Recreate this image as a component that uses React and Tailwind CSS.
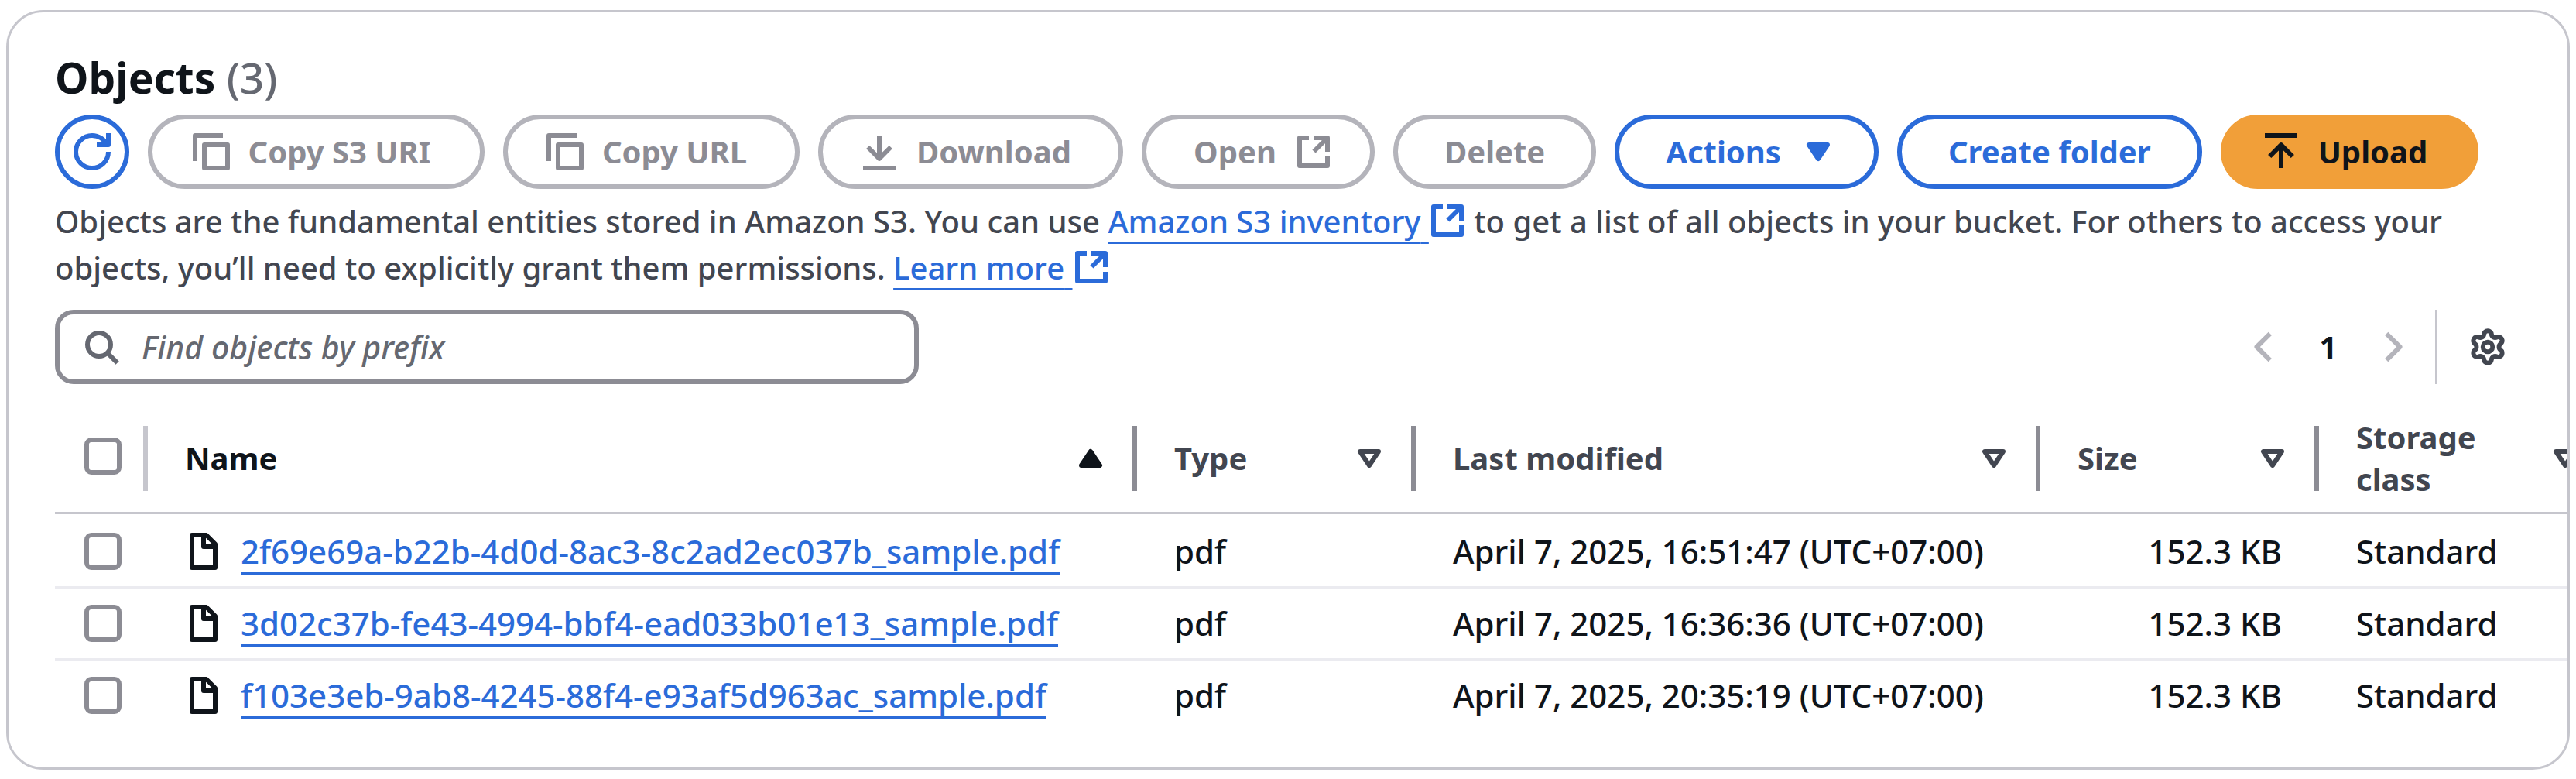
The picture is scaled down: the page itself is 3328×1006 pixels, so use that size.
import { Settings } from "lucide-react";

function Icon({ children, className = "", fill = "none" }) {
  return (
    <svg
      viewBox="0 0 48 48"
      fill={fill}
      stroke="currentColor"
      strokeWidth="6"
      strokeLinejoin="round"
      aria-hidden="true"
      className={`size-12 shrink-0 ${className}`}
    >
      {children}
    </svg>
  );
}

const RefreshIcon = () => (
  <Icon>
    <path d="M45 24A21 21 0 1 1 24 3C32.5 3 39.8 7.9 43 15" />
    <path d="M45 0V15H30" />
  </Icon>
);

const CopyIcon = () => (
  <Icon>
    <path d="M3 36V3H39" />
    <path d="M15 15H45V45H15Z" />
  </Icon>
);

const DownloadIcon = () => (
  <Icon>
    <path d="M24 3V32" />
    <path d="M9.2 18L24 32.8L38.8 18" />
    <path d="M3 45H45" />
  </Icon>
);

const UploadIcon = () => (
  <Icon>
    <path d="M24 16V45" />
    <path d="M9.2 30L24 15.2L38.8 30" />
    <path d="M3 3H45" />
  </Icon>
);

const ExternalIcon = ({ className }) => (
  <Icon className={className}>
    <path d="M18 6H6V42H42V30" />
    <path d="M24 6H42V24" />
    <path d="M24.5 23.5L42 6" />
  </Icon>
);

const SearchIcon = () => (
  <Icon className="text-[#656871]">
    <circle cx="21" cy="21" r="15" />
    <path d="M31 31L44.6 44.6" />
  </Icon>
);

const FileIcon = () => (
  <Icon>
    <path d="M9 3H27.5L39 14.5V45H9Z" />
    <path d="M24 3V18H39" />
  </Icon>
);

const CaretDownFilled = () => (
  <Icon fill="currentColor">
    <path d="M12 15H36L24 33Z" />
  </Icon>
);

const CaretDown = () => (
  <Icon>
    <path d="M12 15H36L24 33Z" />
  </Icon>
);

const CaretUpFilled = () => (
  <Icon fill="currentColor">
    <path d="M24 15L36 33H12Z" />
  </Icon>
);

const variants = {
  disabled: "border-[#b4b4bb] text-[#8c8c94]",
  normal: "border-[#2b6bd9] text-[#2b6bd9]",
  primary: "border-[#f19f39] bg-[#f19f39] text-[#0f141a]",
};

function Button({ variant = "normal", before, after, className = "", children }) {
  return (
    <button
      type="button"
      disabled={variant === "disabled"}
      className={`flex h-24 items-center justify-center gap-6 rounded-full border-6 font-bold ${
        before ? "pl-12" : "pl-15"
      } ${after ? "pr-12" : "pr-15"} ${variants[variant]} ${className}`}
    >
      {before}
      {children}
      {after}
    </button>
  );
}

function ExternalLink({ children }) {
  return (
    <a href="#" className="whitespace-nowrap text-[#2b6bd9]">
      <span className="underline decoration-3 underline-offset-[11px] [text-decoration-skip-ink:none]">
        {children}&nbsp;
      </span>
      <ExternalIcon className="inline-block align-[-8px]" />
    </a>
  );
}

function Checkbox({ label }) {
  return (
    <input
      type="checkbox"
      aria-label={label}
      className="block size-12 appearance-none rounded-[9px] border-6 border-[#8c8c94] bg-white checked:bg-[#2b6bd9]"
    />
  );
}

const columns = [
  { title: "Name", sorted: true },
  { title: "Type" },
  { title: "Last modified" },
  { title: "Size" },
  { title: "Storage class", last: true },
];

const objects = [
  { name: "2f69e69a-b22b-4d0d-8ac3-8c2ad2ec037b_sample.pdf", modified: "April 7, 2025, 16:51:47 (UTC+07:00)" },
  { name: "3d02c37b-fe43-4994-bbf4-ead033b01e13_sample.pdf", modified: "April 7, 2025, 16:36:36 (UTC+07:00)" },
  { name: "f103e3eb-9ab8-4245-88f4-e93af5d963ac_sample.pdf", modified: "April 7, 2025, 20:35:19 (UTC+07:00)" },
];

function HeaderCell({ title, sorted, last }) {
  return (
    <th
      scope="col"
      aria-sort={sorted ? "ascending" : "none"}
      className={`p-0 py-[15px] pl-12 text-left font-bold ${sorted ? "text-[#0f141a]" : "text-[#424650]"}`}
    >
      <div className="flex items-center">
        <button type="button" className="flex grow items-center justify-between text-left">
          <span>{title}</span>
          {sorted ? <CaretUpFilled /> : <CaretDown />}
        </button>
        <span className={`ml-[30px] h-21 w-1.5 shrink-0 ${last ? "" : "bg-[#8c8c94]"}`} />
      </div>
    </th>
  );
}

function ObjectsTable() {
  return (
    <div className="mt-[27px] ml-15 overflow-x-auto [scrollbar-width:none]">
      <table className="w-full min-w-[3303px] table-fixed border-separate border-spacing-0">
        <colgroup>
          <col className="w-[120px]" />
          <col />
          <col className="w-[360px]" />
          <col className="w-[807px]" />
          <col className="w-[360px]" />
          <col className="w-[378px]" />
        </colgroup>
        <thead className="leading-[54px]">
          <tr className="*:border-b-3 *:border-[#c6c6cd]">
            <th scope="col" className="p-0">
              <div className="flex items-center justify-between pl-[38px]">
                <div className="pb-1.5">
                  <Checkbox label="Select all objects" />
                </div>
                <span className="h-21 w-1.5 bg-[#c6c6cd]" />
              </div>
            </th>
            {columns.map((c) => (
              <HeaderCell key={c.title} {...c} />
            ))}
          </tr>
        </thead>
        <tbody className="text-[42px] leading-[60px] font-medium whitespace-nowrap">
          {objects.map((o) => (
            <tr
              key={o.name}
              className="h-[93px] *:border-b-3 *:border-[#ebebf0] first:h-24 first:*:pt-[3px] last:*:border-transparent"
            >
              <td className="pl-[38px]">
                <Checkbox label={`Select ${o.name}`} />
              </td>
              <td className="pl-12">
                <div className="flex items-center gap-6">
                  <FileIcon />
                  <a
                    href="#"
                    className="text-[#2b6bd9] underline decoration-3 underline-offset-[11px] [text-decoration-skip-ink:none]"
                  >
                    {o.name}
                  </a>
                </div>
              </td>
              <td className="pl-12">pdf</td>
              <td className="pl-12">{o.modified}</td>
              <td className="pr-12 text-right">152.3 KB</td>
              <td className="pl-12">Standard</td>
            </tr>
          ))}
        </tbody>
      </table>
    </div>
  );
}

export default function App() {
  return (
    <main className="bg-white px-2 pt-[13px] pb-3 font-['Noto_Sans',sans-serif] text-[40px] leading-[60px] text-[#0f141a]">
      <section className="overflow-hidden rounded-[48px] border-3 border-[#c6c6cd] pt-12 pb-[45px]">
        <div className="px-15">
          <h2 className="text-[55px] leading-[72px] font-bold">
            Objects <span className="font-medium text-[#656871]">(3)</span>
          </h2>
          <div className="mt-3 flex flex-wrap gap-6">
            <button
              type="button"
              aria-label="Refresh"
              className="flex size-24 items-center justify-center rounded-full border-6 border-[#2b6bd9] text-[#2b6bd9]"
            >
              <RefreshIcon />
            </button>
            <Button variant="disabled" className="min-w-[435px]" before={<CopyIcon />}>Copy S3 URI</Button>
            <Button variant="disabled" className="min-w-[383px]" before={<CopyIcon />}>Copy URL</Button>
            <Button variant="disabled" className="min-w-[394px]" before={<DownloadIcon />}>Download</Button>
            <Button variant="disabled" className="min-w-[301px]" after={<ExternalIcon />}>Open</Button>
            <Button variant="disabled">Delete</Button>
            <Button after={<CaretDownFilled />}>Actions</Button>
            <Button>Create folder</Button>
            <Button variant="primary" before={<UploadIcon />}>Upload</Button>
          </div>
          <p className="mt-3 font-medium text-[#424650]">
            Objects are the fundamental entities stored in Amazon S3. You can use{" "}
            <ExternalLink>Amazon S3 inventory</ExternalLink> to get a list of all objects in your bucket. For others to
            access your objects, you’ll need to explicitly grant them permissions.{" "}
            <ExternalLink>Learn more</ExternalLink>
          </p>
          <div className="mt-6 flex items-center justify-between pr-[18px]">
            <label className="flex h-24 w-[1116px] items-center gap-7 rounded-3xl border-6 border-[#8c8c94] px-[30px]">
              <SearchIcon />
              <input
                type="search"
                aria-label="Find objects by prefix"
                placeholder="Find objects by prefix"
                className="min-w-0 grow text-[41px] font-medium outline-none placeholder:text-[#656871] placeholder:italic"
              />
            </label>
            <div className="flex items-center">
              <nav aria-label="Pagination" className="flex items-center">
                <button type="button" disabled aria-label="Previous page" className="text-[#b4b4bb]">
                  <Icon>
                    <path d="M32.8 6.8L15.5 24L32.8 41.2" />
                  </Icon>
                </button>
                <button type="button" aria-current="page" className="w-30 font-bold">1</button>
                <button type="button" disabled aria-label="Next page" className="text-[#b4b4bb]">
                  <Icon>
                    <path d="M15.2 6.8L32.5 24L15.2 41.2" />
                  </Icon>
                </button>
              </nav>
              <span className="ml-[30px] h-24 w-[3px] bg-[#c6c6cd]" />
              <button type="button" aria-label="Preferences" className="ml-10 text-[#424650]">
                <Settings size={50} strokeWidth={2.85} />
              </button>
            </div>
          </div>
        </div>
        <ObjectsTable />
      </section>
    </main>
  );
}
